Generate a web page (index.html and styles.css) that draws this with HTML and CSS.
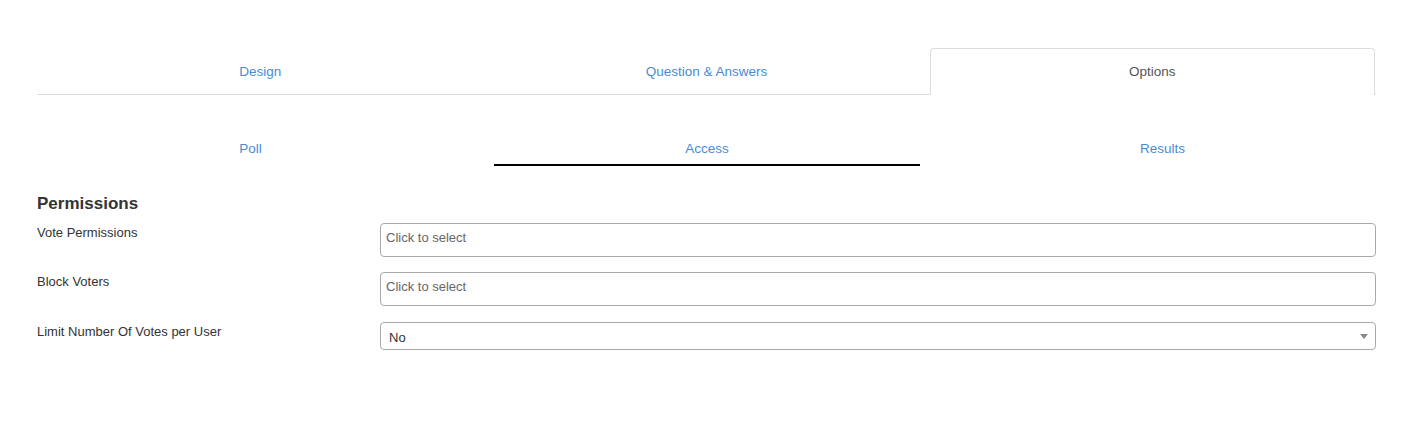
FILE: index.html
```html
<!DOCTYPE html>
<html>
<head>
<meta charset="utf-8">
<link rel="stylesheet" href="styles.css">
</head>
<body>
<div class="page">
  <nav class="tabs">
    <a class="tab">Design</a>
    <a class="tab">Question &amp; Answers</a>
    <a class="tab active">Options</a>
  </nav>
  <nav class="subtabs">
    <a class="subtab">Poll</a>
    <a class="subtab active">Access</a>
    <a class="subtab">Results</a>
  </nav>
  <h3 class="heading">Permissions</h3>
  <div class="form">
    <div class="row">
      <label class="label">Vote Permissions</label>
      <div class="multi">Click to select</div>
    </div>
    <div class="row">
      <label class="label">Block Voters</label>
      <div class="multi">Click to select</div>
    </div>
    <div class="row row-select">
      <label class="label">Limit Number Of Votes per User</label>
      <div class="select">
        <span class="value">No</span>
        <svg class="arrow" width="8" height="5" viewBox="0 0 8 5"><path d="M0 0H8L4 5Z" fill="#888"/></svg>
      </div>
    </div>
  </div>
</div>
</body>
</html>
```
FILE: styles.css
```css
* { box-sizing: border-box; }
html, body { margin: 0; padding: 0; background: #fff; }
body {
  font-family: "Liberation Sans", Arial, sans-serif;
  font-size: 13px;
  color: #333;
}
.page {
  padding: 48px 37px 0 37px;
}
.tabs {
  display: grid;
  grid-template-columns: 1fr 1fr 1fr;
  border-bottom: 1px solid #ddd;
}
.tab {
  display: block;
  height: 47px;
  line-height: 46px;
  text-align: center;
  font-size: 13.5px;
  color: #4a8bd2;
  margin-bottom: -1px;
  border: 1px solid transparent;
  border-radius: 4px 4px 0 0;
}
.tab.active {
  color: #555;
  border-color: #ddd;
  border-bottom-color: #fff;
  background: #fff;
  margin-right: 1px;
}
.subtabs {
  display: grid;
  grid-template-columns: 1fr 1fr 1fr;
  column-gap: 29px;
  margin-top: 45px;
}
.subtab {
  display: block;
  text-align: center;
  font-size: 13.5px;
  color: #4a8bd2;
  line-height: 18px;
  padding-bottom: 6px;
  border-bottom: 2px solid transparent;
}
.subtab.active {
  border-bottom-color: #000;
  padding-bottom: 5px;
  margin-left: 1px;
}
.heading {
  margin: 28px 0 9px 0;
  font-size: 17px;
  line-height: 20px;
  font-weight: bold;
  color: #333;
}
.form {
  display: flex;
  flex-direction: column;
  gap: 15px;
}
.row {
  display: grid;
  grid-template-columns: 343px 1fr;
  align-items: start;
}
.label {
  padding-top: 1px;
  line-height: 18px;
  color: #333;
}
.row-select .label { padding-top: 2px; }
.multi {
  height: 34px;
  border: 1px solid #aaa;
  border-radius: 4px;
  padding: 6px 5px;
  line-height: 16px;
  color: #666;
}
.select {
  height: 28px;
  margin-top: 1px;
  border: 1px solid #aaa;
  border-radius: 4px;
  padding: 0 8px;
  display: flex;
  align-items: center;
  justify-content: space-between;
  color: #333;
}
.value { padding-top: 2px; }
.arrow { display: block; margin-right: -1px; }
```
